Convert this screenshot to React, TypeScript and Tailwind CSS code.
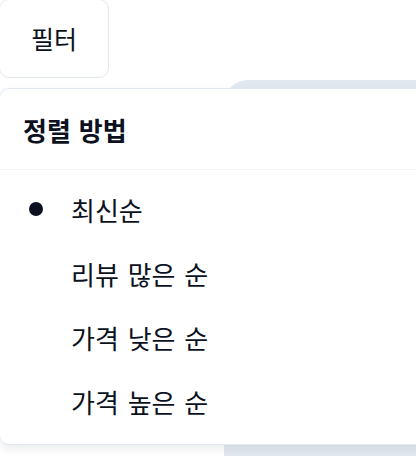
import React from "react";

const items = ["최신순", "리뷰 많은 순", "가격 낮은 순", "가격 높은 순"];

export default function App() {
  return (
    <div
      className="relative w-[416px] h-[456px] overflow-hidden bg-white text-[#0b1120]"
      style={{ fontFamily: '"Noto Sans CJK KR", "Noto Sans", sans-serif' }}
    >
      <div className="absolute left-[224px] top-[80px] w-[300px] h-[400px] rounded-tl-[24px] bg-[#e2e8f0]" />
      <div className="relative flex flex-col">
        <button className="w-[110px] h-[79px] rounded-[10px] border border-[#e2e8f0] bg-white text-[25px] flex items-center justify-center -ml-[1px] -mt-[1px]">
          필터
        </button>
        <div className="mt-[10px] w-[470px] h-[357px] -ml-[1px] rounded-[10px] border border-[#e2e8f0] bg-white shadow-[0_4px_8px_rgba(15,23,42,0.08)] flex flex-col">
          <div className="h-[81px] flex items-center px-[23px] text-[26px] font-bold border-b border-[#f1f5f9] [word-spacing:2px]">
            정렬 방법
          </div>
          <div className="flex flex-col pt-[7px] pb-[8px]">
            {items.map((t, i) => (
              <div key={t} className="h-[64px] flex items-center text-[26px] [word-spacing:3px]">
                <div className="w-[71px] flex justify-center pl-[1px]">
                  {i === 0 && <span className="w-[14px] h-[14px] rounded-full bg-[#0b1120]" />}
                </div>
                <span>{t}</span>
              </div>
            ))}
          </div>
        </div>
      </div>
    </div>
  );
}
